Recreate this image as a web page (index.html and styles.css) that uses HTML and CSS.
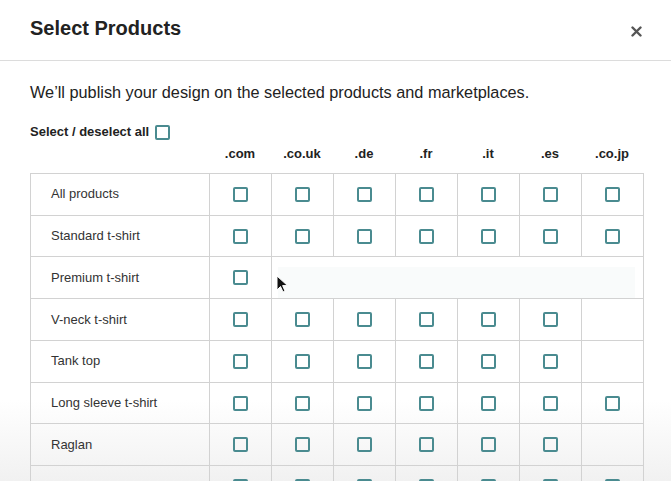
FILE: index.html
```html
<!DOCTYPE html>
<html>
<head>
<meta charset="utf-8">
<link rel="stylesheet" href="styles.css">
</head>
<body>
<div class="modal">
  <div class="header">
    <h1 class="title">Select Products</h1>
    <svg class="close" width="11" height="11" viewBox="0 0 11 11"><path d="M1.5 1.5 L9.5 9.5 M9.5 1.5 L1.5 9.5" stroke="#555" stroke-width="2.4" stroke-linecap="round"/></svg>
  </div>
  <div class="content">
    <p class="intro">We’ll publish your design on the selected products and marketplaces.</p>
    <div class="select-all"><span>Select / deselect all</span><span class="cb"></span></div>
    <div class="col-heads">
      <span class="ch-spacer"></span>
      <span class="ch">.com</span><span class="ch">.co.uk</span><span class="ch">.de</span><span class="ch">.fr</span><span class="ch">.it</span><span class="ch">.es</span><span class="ch">.co.jp</span>
    </div>
    <table class="grid">
      <colgroup><col class="c-name"><col class="c-m"><col class="c-m"><col class="c-m"><col class="c-m"><col class="c-m"><col class="c-m"><col class="c-m"></colgroup>
      <tr><td class="name">All products</td><td><span class="cb"></span></td><td><span class="cb"></span></td><td><span class="cb"></span></td><td><span class="cb"></span></td><td><span class="cb"></span></td><td><span class="cb"></span></td><td><span class="cb"></span></td></tr>
      <tr><td class="name">Standard t-shirt</td><td><span class="cb"></span></td><td><span class="cb"></span></td><td><span class="cb"></span></td><td><span class="cb"></span></td><td><span class="cb"></span></td><td><span class="cb"></span></td><td><span class="cb"></span></td></tr>
      <tr><td class="name">Premium t-shirt</td><td><span class="cb"></span></td><td colspan="6" class="merged"><div class="ghost"></div></td></tr>
      <tr><td class="name">V-neck t-shirt</td><td><span class="cb"></span></td><td><span class="cb"></span></td><td><span class="cb"></span></td><td><span class="cb"></span></td><td><span class="cb"></span></td><td><span class="cb"></span></td><td></td></tr>
      <tr><td class="name">Tank top</td><td><span class="cb"></span></td><td><span class="cb"></span></td><td><span class="cb"></span></td><td><span class="cb"></span></td><td><span class="cb"></span></td><td><span class="cb"></span></td><td></td></tr>
      <tr><td class="name">Long sleeve t-shirt</td><td><span class="cb"></span></td><td><span class="cb"></span></td><td><span class="cb"></span></td><td><span class="cb"></span></td><td><span class="cb"></span></td><td><span class="cb"></span></td><td><span class="cb"></span></td></tr>
      <tr><td class="name">Raglan</td><td><span class="cb"></span></td><td><span class="cb"></span></td><td><span class="cb"></span></td><td><span class="cb"></span></td><td><span class="cb"></span></td><td><span class="cb"></span></td><td></td></tr>
      <tr><td class="name"></td><td><span class="cb"></span></td><td><span class="cb"></span></td><td><span class="cb"></span></td><td><span class="cb"></span></td><td><span class="cb"></span></td><td><span class="cb"></span></td><td><span class="cb"></span></td></tr>
    </table>
  </div>
  <svg class="cursor" width="13" height="19" viewBox="0 0 13 19"><path d="M1 1 L1 15 L4.5 11.5 L7 17 L9 16 L6.6 10.6 L11.5 10.6 Z" fill="#111" stroke="#fff" stroke-width="1"/></svg>
</div>
</body>
</html>
```
FILE: styles.css
```css
html, body {
  margin: 0;
  padding: 0;
  overflow: hidden;
  height: 100%;
}
body {
  font-family: "Liberation Sans", Arial, sans-serif;
  color: #222;
  background: linear-gradient(to bottom, #ffffff 0px, #ffffff 400px, #f1f1f1 481px);
}
.modal {
  position: relative;
  width: 671px;
  height: 481px;
}
.header {
  height: 61px;
  box-sizing: border-box;
  border-bottom: 1px solid #dcdcdc;
  padding: 0 29px 4px 30px;
  display: flex;
  align-items: center;
  justify-content: space-between;
}
.title {
  margin: 0;
  font-size: 20px;
  line-height: 23px;
  font-weight: bold;
  color: #222;
}
.close {
  margin-top: 6px;
}
.content {
  padding: 0 28px 0 30px;
}
.intro {
  margin: 21px 0 0;
  font-size: 16.3px;
  line-height: 20px;
  color: #222;
}
.select-all {
  margin-top: 22px;
  display: flex;
  align-items: center;
  gap: 6px;
  font-size: 13px;
  line-height: 16px;
  font-weight: bold;
  color: #222;
}
.cb {
  display: inline-block;
  width: 15px;
  height: 15px;
  box-sizing: border-box;
  border: 2px solid #4a8b90;
  border-radius: 2px;
  vertical-align: middle;
}
.col-heads {
  margin-top: 6px;
  display: flex;
  font-size: 13px;
  line-height: 16px;
  font-weight: bold;
  color: #222;
}
.ch-spacer {
  width: 179px;
}
.ch {
  width: 62px;
  text-align: center;
}
.grid {
  margin-top: 11px;
  border-collapse: collapse;
  table-layout: fixed;
  width: 613px;
}
.c-name { width: 179px; }
.c-m { width: 62px; }
.grid td {
  border: 1px solid #d2d2d2;
  height: 41.7px;
  padding: 0;
  text-align: center;
  box-sizing: border-box;
  line-height: 0;
}
.grid td.name {
  text-align: left;
  padding-left: 20px;
  font-size: 13px;
  line-height: 16px;
  color: #333;
}
.grid td.merged {
  vertical-align: bottom;
  padding: 10px 8px 0 6px;
}
.ghost {
  height: 31px;
  background: #f9fbfb;
}
.cursor {
  position: absolute;
  left: 276px;
  top: 275px;
}
```
